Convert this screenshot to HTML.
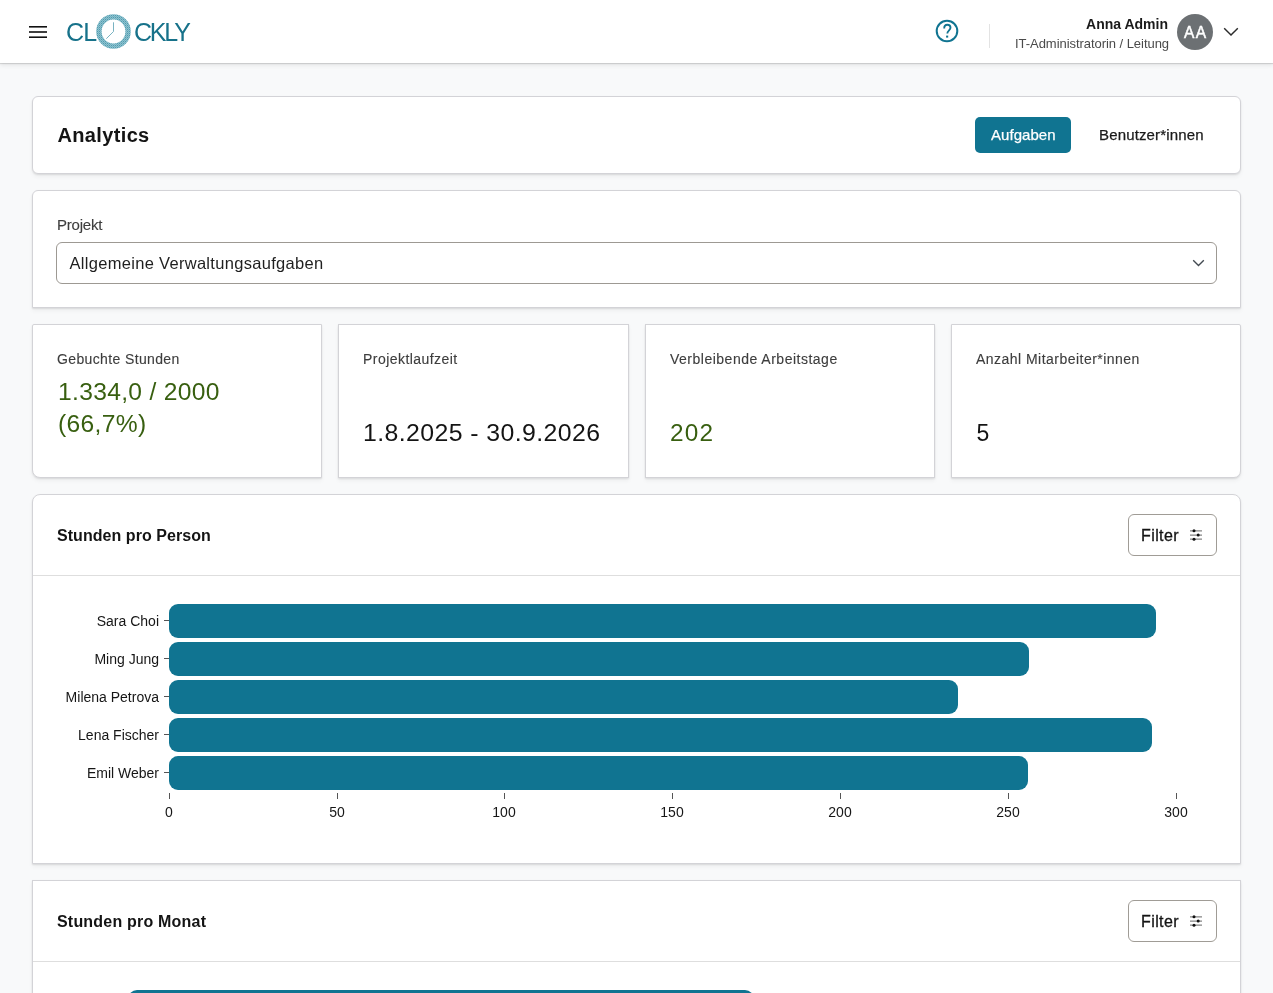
<!DOCTYPE html>
<html><head><meta charset="utf-8"><title>Analytics</title>
<style>
*{box-sizing:border-box;margin:0;padding:0}
html,body{width:1273px;height:993px;overflow:hidden}
body{background:#f8f9fa;font-family:"Liberation Sans",sans-serif;color:#1a1a1a;position:relative}
.abs{position:absolute}
.t{position:absolute;white-space:nowrap;line-height:1}
#hdr{position:absolute;left:0;top:0;width:1273px;height:63px;background:#fff;box-shadow:0 1px 1px rgba(0,0,0,.13),0 2px 5px rgba(0,0,0,.09);z-index:5}
.card{position:absolute;background:#fff;border:1px solid #d3d3d7;box-shadow:0 1px 2px rgba(0,0,0,.1),0 3px 4px rgba(0,0,0,.045)}
.btn-p{position:absolute;background:#107491;border-radius:5px}
.fbtn{position:absolute;border:1px solid #a09c96;border-radius:6px;background:#fff}
.lbl{color:#3d3d3d;font-size:14px;-webkit-text-stroke:0.12px #3d3d3d}
.val{font-size:23px}
.green{color:#385f10}
.bar{position:absolute;left:169px;height:34px;background:#107491;border-radius:9px}
.ytick{position:absolute;left:164px;width:5px;height:1px;background:#555}
.ylab{position:absolute;right:1114px;font-size:14px;color:#161616;line-height:1}
.xtick{position:absolute;top:793px;width:1px;height:6px;background:#555}
.xlab{position:absolute;top:805px;font-size:14px;color:#161616;line-height:1;width:60px;text-align:center}
#root{position:absolute;left:0;top:0;width:1273px;height:993px;will-change:transform}
</style></head><body><div id="root">

<div id="hdr">
  <svg class="abs" style="left:29px;top:25px" width="18" height="14" viewBox="0 0 18 14">
    <rect x="0" y="1" width="18" height="1.6" fill="#111"/>
    <rect x="0" y="6.2" width="18" height="1.6" fill="#111"/>
    <rect x="0" y="11.4" width="18" height="1.6" fill="#111"/>
  </svg>
  <div class="t" style="left:66px;top:20px;font-size:25px;color:#17728a;letter-spacing:-0.8px">CL</div>
  <svg class="abs" style="left:95px;top:13px" width="37" height="37" viewBox="0 0 37 37">
    <defs><pattern id="dots" width="2" height="2" patternUnits="userSpaceOnUse"><rect width="2" height="2" fill="#8fc2ce"/><rect x="0" y="0" width="1" height="1" fill="#4f9bb0"/><rect x="1" y="1" width="1" height="1" fill="#6fb0c0"/></pattern></defs><circle cx="18.5" cy="18.5" r="14.6" fill="none" stroke="url(#dots)" stroke-width="5.4"/>
    <path d="M18.5 18.5 V9.3 M18.5 18.5 L11.3 25.7" stroke="#6aaabb" stroke-width="0.9" fill="none"/>
  </svg>
  <div class="t" style="left:134px;top:20px;font-size:25px;color:#17728a;letter-spacing:-2.2px">CKLY</div>

  <svg class="abs" style="left:934px;top:19px" width="26" height="24" viewBox="0 0 26 24">
    <circle cx="13" cy="12" r="10.3" fill="none" stroke="#107491" stroke-width="2"/>
    <path d="M10.2 9.4 C10.2 7.1 11.6 5.7 13.3 5.7 C15.1 5.7 16.5 7 16.5 8.8 C16.5 11.2 13.3 11.6 13.3 14.6" fill="none" stroke="#107491" stroke-width="1.85"/>
    <rect x="12.1" y="16.6" width="2.1" height="2" fill="#107491"/>
  </svg>
  <div class="abs" style="left:989px;top:24px;width:1px;height:24px;background:#e3e3e3"></div>
  <div class="t" style="right:105px;top:17px;font-size:14px;font-weight:bold;color:#1a1a1a">Anna Admin</div>
  <div class="t" style="right:104px;top:37px;font-size:13px;color:#4a4a4a;letter-spacing:-0.05px">IT-Administratorin / Leitung</div>
  <div class="abs" style="left:1177px;top:14px;width:36px;height:36px;border-radius:50%;background:#6c7073"></div>
  <div class="t" style="left:1183.6px;top:24px;font-size:16.5px;color:#fff;-webkit-text-stroke:0.5px #fff;letter-spacing:1.5px;transform:scaleX(0.94);transform-origin:0 0">AA</div>
  <svg class="abs" style="left:1223px;top:27px" width="16" height="10" viewBox="0 0 16 10">
    <path d="M1.2 1.2 L8 8 L14.8 1.2" fill="none" stroke="#2b2b2b" stroke-width="1.45"/>
  </svg>
</div>

<!-- Analytics card -->
<div class="card" style="left:32px;top:96px;width:1209px;height:78px;border-radius:6px"></div>
<div class="t" style="left:57.5px;top:125px;font-size:20px;font-weight:bold;color:#141414;letter-spacing:0.35px">Analytics</div>
<div class="btn-p" style="left:975px;top:117px;width:96px;height:36px"></div>
<div class="t" style="left:991px;top:127px;font-size:15px;color:#fff;letter-spacing:0.05px;-webkit-text-stroke:0.25px #fff">Aufgaben</div>
<div class="t" style="left:1099px;top:127px;font-size:15px;color:#1a1a1a;letter-spacing:0.15px;-webkit-text-stroke:0.25px #1a1a1a">Benutzer*innen</div>

<!-- Projekt card -->
<div class="card" style="left:32px;top:190px;width:1209px;height:118px;border-radius:6px 6px 0 0"></div>
<div class="t lbl" style="left:57px;top:217px;font-size:15px;letter-spacing:-0.2px">Projekt</div>
<div class="abs" style="left:56px;top:242px;width:1161px;height:42px;border:1px solid #9d9993;border-radius:6px;background:#fff"></div>
<div class="t" style="left:69.5px;top:254.5px;font-size:16.5px;color:#1f1f1f;letter-spacing:0.3px">Allgemeine Verwaltungsaufgaben</div>
<svg class="abs" style="left:1191.5px;top:259px" width="13" height="8" viewBox="0 0 13 8">
  <path d="M1.2 1.2 L6.5 6.5 L11.8 1.2" fill="none" stroke="#434a51" stroke-width="1.35"/>
</svg>

<!-- Stat cards -->
<div class="card" style="left:32px;top:324px;width:290px;height:154px;border-radius:2px 0 0 8px"></div>
<div class="card" style="left:338px;top:324px;width:291px;height:154px"></div>
<div class="card" style="left:645px;top:324px;width:290px;height:154px"></div>
<div class="card" style="left:951px;top:324px;width:290px;height:154px;border-radius:0 2px 7px 0"></div>

<div class="t lbl" style="left:57px;top:352px;letter-spacing:0.37px">Gebuchte Stunden</div>
<div class="t val green" style="left:57.5px;top:377.2px;letter-spacing:0.3px;line-height:31.5px;transform:scaleX(1.07);transform-origin:0 0">1.334,0 / 2000<br>(66,7%)</div>
<div class="t lbl" style="left:363px;top:352px;letter-spacing:0.45px">Projektlaufzeit</div>
<div class="t val" style="left:363px;top:421.5px;letter-spacing:0.38px;color:#141414;transform:scaleX(1.08);transform-origin:0 0">1.8.2025 - 30.9.2026</div>
<div class="t lbl" style="left:670px;top:352px;letter-spacing:0.5px">Verbleibende Arbeitstage</div>
<div class="t val green" style="left:670px;top:421.5px;letter-spacing:1.1px;transform:scaleX(1.06);transform-origin:0 0">202</div>
<div class="t lbl" style="left:976px;top:352px;letter-spacing:0.47px">Anzahl Mitarbeiter*innen</div>
<div class="t val" style="left:976.5px;top:421.5px;color:#141414">5</div>

<!-- Chart card 1 -->
<div class="card" style="left:32px;top:494px;width:1209px;height:370px;border-radius:8px 8px 0 0"></div>
<div class="abs" style="left:33px;top:575px;width:1207px;height:1px;background:#dedede"></div>
<div class="t" style="left:57px;top:528px;font-size:16px;font-weight:bold;color:#141414;letter-spacing:0.05px">Stunden pro Person</div>
<div class="fbtn" style="left:1128px;top:514px;width:89px;height:42px"></div>
<div class="t" style="left:1141px;top:527.5px;font-size:16px;color:#141414;letter-spacing:0.4px;-webkit-text-stroke:0.3px #141414">Filter</div>
<svg class="abs" style="left:1189px;top:528px" width="14" height="14" viewBox="0 0 14 14">
  <g stroke="#858585" stroke-width="1.25"><path d="M1 2.8H13M1 7H13M1 11.2H13"/></g>
  <g fill="#111"><circle cx="5" cy="2.8" r="1.5"/><circle cx="9.2" cy="7" r="1.5"/><circle cx="5" cy="11.2" r="1.5"/></g>
</svg>

<div class="bar" style="top:604px;width:987px"></div>
<div class="bar" style="top:642px;width:860px"></div>
<div class="bar" style="top:680px;width:789px"></div>
<div class="bar" style="top:718px;width:983px"></div>
<div class="bar" style="top:756px;width:859px"></div>
<div class="ytick" style="top:620px"></div>
<div class="ytick" style="top:658px"></div>
<div class="ytick" style="top:696px"></div>
<div class="ytick" style="top:734px"></div>
<div class="ytick" style="top:772px"></div>
<div class="ylab" style="top:614px">Sara Choi</div>
<div class="ylab" style="top:652px">Ming Jung</div>
<div class="ylab" style="top:690px">Milena Petrova</div>
<div class="ylab" style="top:728px">Lena Fischer</div>
<div class="ylab" style="top:766px">Emil Weber</div>
<div class="xtick" style="left:169px"></div>
<div class="xtick" style="left:337px"></div>
<div class="xtick" style="left:504px"></div>
<div class="xtick" style="left:672px"></div>
<div class="xtick" style="left:840px"></div>
<div class="xtick" style="left:1008px"></div>
<div class="xtick" style="left:1176px"></div>
<div class="xlab" style="left:139px">0</div>
<div class="xlab" style="left:307px">50</div>
<div class="xlab" style="left:474px">100</div>
<div class="xlab" style="left:642px">150</div>
<div class="xlab" style="left:810px">200</div>
<div class="xlab" style="left:978px">250</div>
<div class="xlab" style="left:1146px">300</div>

<!-- Chart card 2 -->
<div class="card" style="left:32px;top:880px;width:1209px;height:200px"></div>
<div class="abs" style="left:33px;top:961px;width:1207px;height:1px;background:#dedede"></div>
<div class="t" style="left:57px;top:914px;font-size:16px;font-weight:bold;color:#141414;letter-spacing:0.2px">Stunden pro Monat</div>
<div class="fbtn" style="left:1128px;top:900px;width:89px;height:42px"></div>
<div class="t" style="left:1141px;top:913.5px;font-size:16px;color:#141414;letter-spacing:0.4px;-webkit-text-stroke:0.3px #141414">Filter</div>
<svg class="abs" style="left:1189px;top:914px" width="14" height="14" viewBox="0 0 14 14">
  <g stroke="#858585" stroke-width="1.25"><path d="M1 2.8H13M1 7H13M1 11.2H13"/></g>
  <g fill="#111"><circle cx="5" cy="2.8" r="1.5"/><circle cx="9.2" cy="7" r="1.5"/><circle cx="5" cy="11.2" r="1.5"/></g>
</svg>
<div class="abs" style="left:127.5px;top:989.6px;width:626px;height:34px;background:#107491;border-radius:9px"></div>

</div></body></html>
